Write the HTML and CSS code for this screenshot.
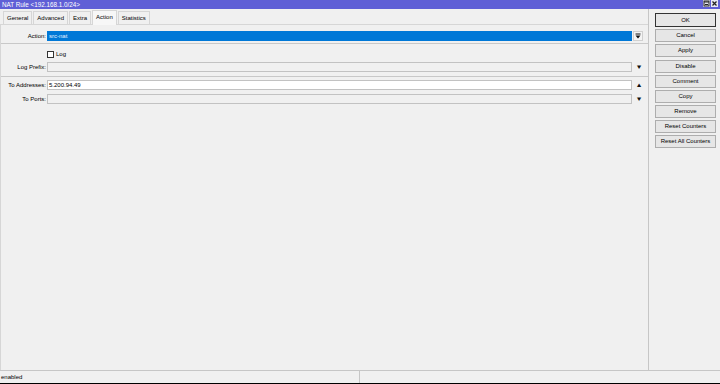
FILE: index.html
```html
<!DOCTYPE HTML>
<html>
<head>
    <title>NAT Rule</title>
    <meta charset="utf-8">
    <link rel="stylesheet" href="styles.css">
</head>
<body>
<div class="titlebar">
    <span class="title">NAT Rule &lt;192.168.1.0/24&gt;</span>
    <span class="winbtns">
        <span class="winbtn"><svg width="7" height="7" viewBox="0 0 7 7"><rect x="1" y="1" width="5" height="5" fill="none" stroke="#222" stroke-width="1"/><line x1="1" y1="2" x2="6" y2="2" stroke="#222"/><line x1="2" y1="4.5" x2="5" y2="4.5" stroke="#222"/></svg></span>
        <span class="winbtn"><svg width="7" height="7" viewBox="0 0 7 7"><path d="M1.5 1.5 L5.5 5.5 M5.5 1.5 L1.5 5.5" stroke="#222" stroke-width="1.3"/></svg></span>
    </span>
</div>

<div class="window">
    <div class="main">
        <div class="tabs">
            <span class="tab">General</span>
            <span class="tab">Advanced</span>
            <span class="tab">Extra</span>
            <span class="tab active">Action</span>
            <span class="tab">Statistics</span>
        </div>
        <div class="panel">
            <div class="row first">
                <label class="lbl">Action:</label>
                <div class="field selected">src-nat</div>
                <span class="combo"><svg width="6" height="6" viewBox="0 0 6 6"><rect x="0.5" y="0.5" width="5" height="1" fill="#111"/><path d="M0.5 2.5 H5.5 L3 5.5 Z" fill="#111"/></svg></span>
            </div>
            <hr class="sep">
            <div class="row check">
                <span class="lbl"></span>
                <span class="box"></span><span>Log</span>
            </div>
            <div class="row">
                <label class="lbl">Log Prefix:</label>
                <div class="field gray"></div>
                <span class="arrow">&#9660;</span>
            </div>
            <hr class="sep">
            <div class="row">
                <label class="lbl">To Addresses:</label>
                <div class="field">5.200.94.49</div>
                <span class="arrow">&#9650;</span>
            </div>
            <div class="row">
                <label class="lbl">To Ports:</label>
                <div class="field gray"></div>
                <span class="arrow">&#9660;</span>
            </div>
        </div>
    </div>
    <div class="side">
        <div class="btn default">OK</div>
        <div class="btn">Cancel</div>
        <div class="btn">Apply</div>
        <div class="btn gap">Disable</div>
        <div class="btn">Comment</div>
        <div class="btn">Copy</div>
        <div class="btn">Remove</div>
        <div class="btn">Reset Counters</div>
        <div class="btn">Reset All Counters</div>
    </div>
</div>

<div class="status">
    <span class="cell">enabled</span>
    <span class="cell rest"></span>
</div>
</body>
</html>
```

FILE: styles.css
```css
html, body {
    margin: 0;
    padding: 0;
}
body {
    width: 720px;
    height: 384px;
    overflow: hidden;
    background: #f0f0f0;
    font-family: "Liberation Sans", Arial, sans-serif;
    font-size: 6px;
    color: #000;
}
.titlebar {
    height: 9px;
    background: #5f5fd6;
    color: #fff;
    display: flex;
    justify-content: space-between;
    align-items: center;
    padding-left: 2px;
    line-height: 9px;
}
.title {
    font-size: 6.3px;
}
.winbtns {
    display: flex;
    gap: 1px;
    padding-right: 2px;
    align-self: flex-start;
}
.winbtn {
    width: 7px;
    height: 7px;
    background: #e8e8f4;
    display: flex;
}
.window {
    display: flex;
    height: 361px;
}
.main {
    flex: 1;
    display: flex;
    flex-direction: column;
}
.tabs {
    display: flex;
    align-items: flex-end;
    gap: 1px;
    padding: 3px 0 0 3px;
    height: 15px;
    box-sizing: border-box;
}
.tab {
    height: 13px;
    box-sizing: border-box;
    border: 1px solid #d6d6d6;
    border-bottom: none;
    padding: 0 3px;
    line-height: 12px;
    background: #f0f0f0;
}
.tab.active {
    height: 15px;
    margin-bottom: -1px;
    background: #f7f7f7;
    position: relative;
    line-height: 13px;
}
.panel {
    flex: 1;
    display: flex;
    flex-direction: column;
    border-top: 1px solid #d6d6d6;
    border-left: 1px solid #d6d6d6;
    padding-top: 6px;
}
.row {
    display: flex;
    align-items: center;
    height: 10px;
    margin-bottom: 4px;
    flex: none;
}
.row.first {
    margin-bottom: 2px;
}
.lbl {
    width: 45px;
    text-align: right;
    padding-right: 1px;
    flex: none;
}
.field {
    width: 585px;
    height: 10px;
    box-sizing: border-box;
    border: 1px solid #c2c2c2;
    background: #fff;
    line-height: 8px;
    padding-left: 1px;
    flex: none;
}
.field.gray {
    background: #f0f0f0;
}
.field.selected {
    background: #0078d7;
    color: #e8f0ff;
    border-color: #0078d7;
}
.combo {
    width: 10px;
    height: 10px;
    box-sizing: border-box;
    border: 1px solid #d0d0d0;
    background: #f4f4f4;
    margin-left: 1px;
    display: flex;
    align-items: center;
    justify-content: center;
}
.arrow {
    font-size: 6px;
    margin-left: 4px;
    color: #111;
    transform: scaleX(1.2);
}
.sep {
    margin: 0 0 3px 0;
    border: none;
    border-top: 1px solid #c8c8c8;
    height: 0;
    flex: none;
    width: 100%;
}
.row.check {
    height: 8px;
    margin-top: 3px;
    margin-bottom: 4px;
}
.box {
    width: 7px;
    height: 7px;
    box-sizing: border-box;
    border: 1px solid #333;
    background: #fff;
    margin-right: 2px;
}
.side {
    width: 72px;
    border-left: 1px solid #c6c6c6;
    box-sizing: border-box;
    padding: 4px 0 0 6px;
}
.btn {
    width: 61px;
    height: 13px;
    box-sizing: border-box;
    border: 1px solid #adadad;
    background: #e6e6e6;
    text-align: center;
    line-height: 11px;
    margin-bottom: 2px;
}
.btn.default {
    height: 14px;
    border: 1px solid #333;
    line-height: 12px;
}
.btn.gap {
    margin-top: 3px;
}
.status {
    display: flex;
    height: 14px;
    border-top: 1px solid #c6c6c6;
    border-bottom: 1px solid #000;
    box-sizing: border-box;
}
.cell {
    width: 358px;
    border-right: 1px solid #c6c6c6;
    padding-left: 1px;
    line-height: 12px;
}
.cell.rest {
    flex: 1;
    border-right: none;
    margin-right: 2px;
}
```
